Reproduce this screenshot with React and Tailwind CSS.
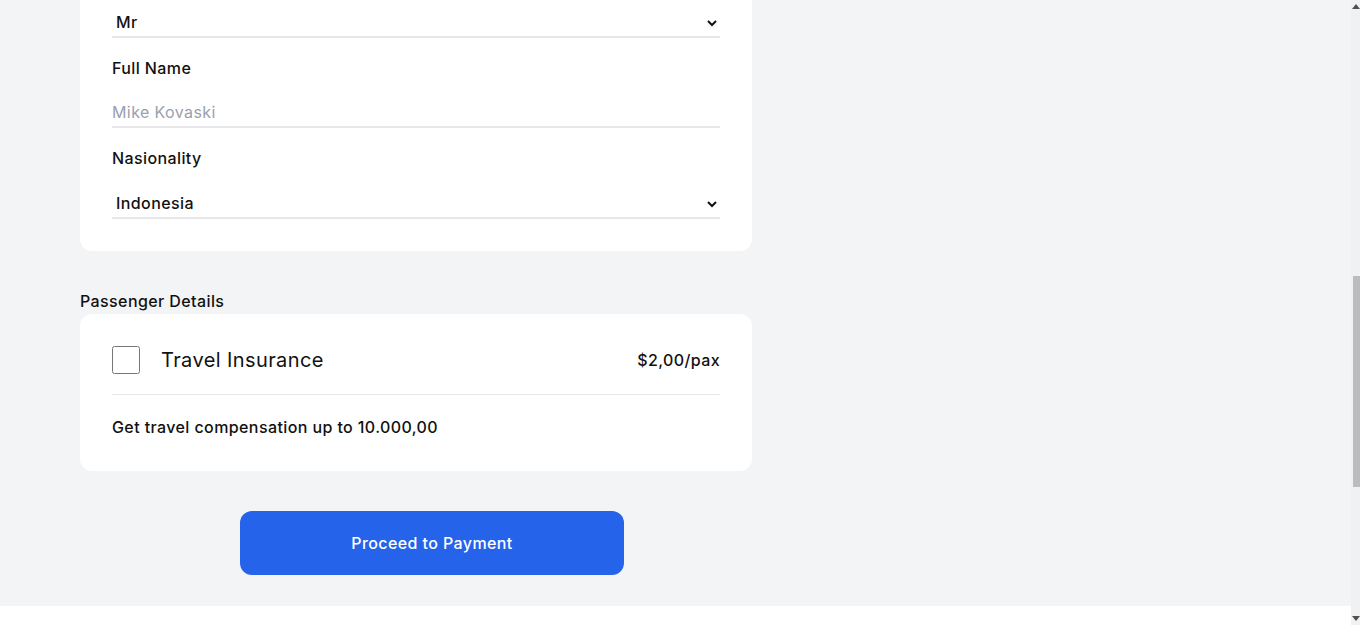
import React, { useLayoutEffect, useRef } from 'react';

const font = { fontFamily: 'Inter, "Noto Sans", sans-serif' };

function Field({ label, placeholder, className = '' }) {
    return (
        <div className={className}>
            <label className="block text-base leading-6 font-medium text-[#111] mb-[18px]">{label}</label>
            <input
                type="text"
                placeholder={placeholder}
                className="w-full h-[30px] border-0 border-b-2 border-gray-200 text-base text-[#111] placeholder:text-gray-400 focus:outline-none"
            />
        </div>
    );
}

function SelectField({ label, options, className = '' }) {
    return (
        <div className={className}>
            <label className="block text-base leading-6 font-medium text-[#111] mb-[19px]">{label}</label>
            <select className="w-full h-[30px] border-0 border-b-2 border-gray-200 bg-white text-base font-medium text-[#111] focus:outline-none">
                {options.map((o) => (
                    <option key={o}>{o}</option>
                ))}
            </select>
        </div>
    );
}

// browser scrollbar seen at the right edge of the screenshot
function ScrollbarOverlay() {
    return (
        <div aria-hidden="true" className="fixed top-0 right-0 h-screen w-[9px] bg-[#f1f1f1]">
            <svg className="absolute top-[3px] left-0" width="9" height="7" viewBox="0 0 9 7">
                <polygon points="5,1 9,6 1,6" fill="#505050" />
            </svg>
            <div className="absolute top-[276px] left-[2px] w-[7px] h-[211px] bg-[#bcbcbc]"></div>
            <svg className="absolute bottom-[3px] left-0" width="9" height="7" viewBox="0 0 9 7">
                <polygon points="1,1 9,1 5,6" fill="#505050" />
            </svg>
        </div>
    );
}

export default function App() {
    const scroller = useRef(null);

    // page is shown scrolled down to the bottom
    useLayoutEffect(() => {
        const el = scroller.current;
        if (el) el.scrollTop = el.scrollHeight;
    }, []);

    return (
        <div ref={scroller} className="h-screen overflow-y-scroll bg-white text-[#111] tracking-[0.025em]" style={font}>
            <nav className="h-16 bg-white"></nav>

            <main className="bg-gray-100 px-20 pt-10 pb-[31px]">
                <h1 className="text-2xl leading-8 font-semibold mb-8">Booking Details</h1>

                {/* Contact section */}
                <h2 className="text-base leading-6 font-medium">Contact Details</h2>
                <div className="w-[672px] bg-white rounded-xl p-8">
                    <Field label="Full Name" placeholder="Mike Kovaski" />
                    <Field label="Email" placeholder="mike@mail.com" className="mt-[18px]" />
                    <Field label="Phone Number" placeholder="+62 812 0000 0000" className="mt-[18px]" />
                    <Field label="Address" placeholder="Jl. Sudirman No. 1" className="mt-[18px]" />
                    <Field label="City" placeholder="Jakarta" className="mt-[18px]" />
                </div>

                {/* Traveler section */}
                <h2 className="text-base leading-6 font-medium mt-10">Traveler Details</h2>
                <div className="w-[672px] bg-white rounded-xl p-8">
                    <SelectField label="Title" options={['Mr', 'Mrs', 'Ms']} />
                    <Field label="Full Name" placeholder="Mike Kovaski" className="mt-[18px]" />
                    <SelectField label="Nasionality" options={['Indonesia', 'Malaysia', 'Singapore']} className="mt-[18px]" />
                </div>

                {/* Insurance */}
                <h2 className="text-base leading-6 font-medium mt-[38px] mb-px">Passenger Details</h2>
                <div className="w-[672px] bg-white rounded-xl p-8">
                    <div className="flex items-center justify-between pb-5 border-b border-gray-200">
                        <label className="flex items-center">
                            <input type="checkbox" className="w-7 h-7 m-0" />
                            <span className="ml-[21px] text-xl leading-7">Travel Insurance</span>
                        </label>
                        <span className="text-base leading-6 font-medium">$2,00/pax</span>
                    </div>
                    <p className="pt-5 text-base leading-6 font-medium">Get travel compensation up to 10.000,00</p>
                </div>

                <button
                    type="button"
                    className="ml-40 mt-10 w-96 h-16 bg-[#2563eb] text-white rounded-xl text-base font-medium"
                >
                    Proceed to Payment
                </button>
            </main>

            <footer className="h-[19px] bg-white"></footer>

            <ScrollbarOverlay />
        </div>
    );
}
